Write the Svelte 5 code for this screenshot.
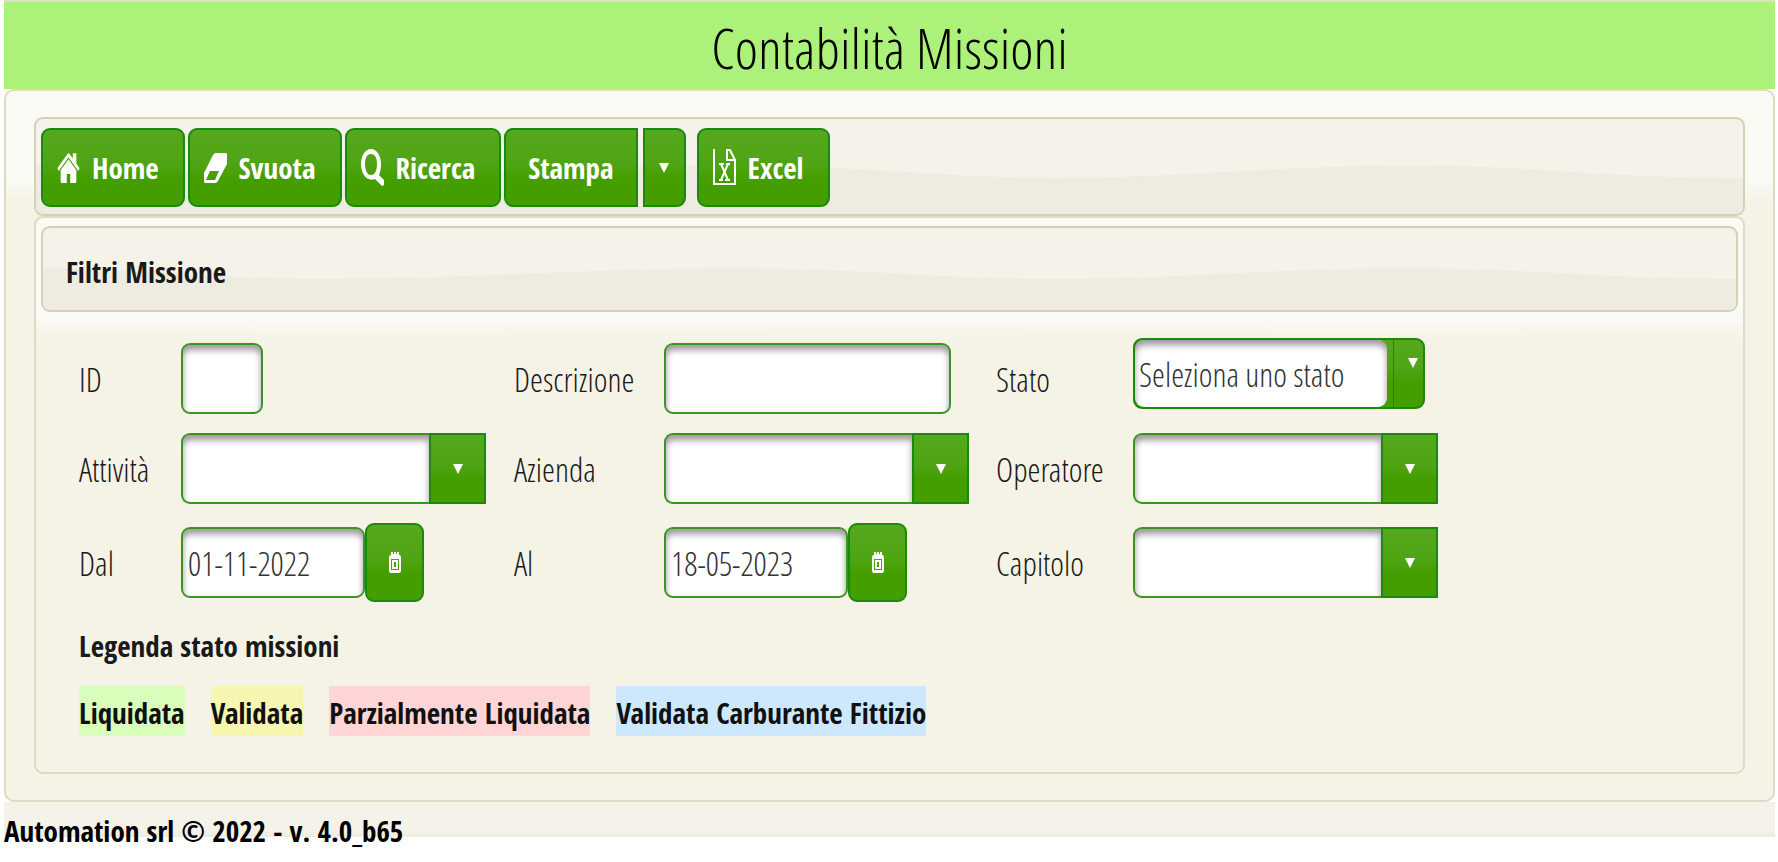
<script lang="ts">
  interface LegendItem {
    label: string;
    tone: string;
  }

  let id = $state('');
  let descrizione = $state('');
  let stato = $state('');
  let attivita = $state('');
  let azienda = $state('');
  let operatore = $state('');
  let capitolo = $state('');
  let dal = $state('01-11-2022');
  let al = $state('18-05-2023');

  const legend: LegendItem[] = [
    { label: 'Liquidata', tone: 'green' },
    { label: 'Validata', tone: 'yellow' },
    { label: 'Parzialmente Liquidata', tone: 'red' },
    { label: 'Validata Carburante Fittizio', tone: 'blue' }
  ];

  function clearFilters() {
    id = descrizione = stato = attivita = azienda = operatore = capitolo = dal = al = '';
  }
</script>

{#snippet wave()}
  <svg class="wave" viewBox="0 0 1704 100" preserveAspectRatio="none" aria-hidden="true">
    <path d="M0 49C100 49 160 62 290 62S550 49 690 49S900 62 1020 62S1240 49 1370 49S1560 62 1704 62V100H0Z" />
  </svg>
{/snippet}

{#snippet caret()}
  <svg class="caret" viewBox="0 0 10 10" preserveAspectRatio="none" aria-hidden="true"><path d="M0 0H10L5 10Z" /></svg>
{/snippet}

{#snippet calendar()}
  <svg class="calendar" viewBox="0 0 12 21" aria-hidden="true">
    <path fill-rule="evenodd" d="M2 0h2v2h1V0h2v2h1V0h2v3h1l1 2v14l-1 2H1l-1-2V5l1-2h1zM2 7v11h8V7zM3 8h6v9H3zM5 10v5h2v-5z" />
  </svg>
{/snippet}

<header class="title-bar">
  <h1>Contabilità Missioni</h1>
</header>

<main class="page-panel">
  <div class="toolbar">
    {@render wave()}
    <button type="button" class="btn">
      <svg class="icon" viewBox="50 240 1692 1300" preserveAspectRatio="none" aria-hidden="true">
        <path d="M1472 992v480q0 26-19 45t-45 19h-384v-384h-256v384h-384q-26 0-45-19t-19-45v-480q0-1 .5-3t.5-3l575-474 575 474q1 2 1 6zm223-69l-62 74q-8 9-21 11h-3q-13 0-21-7l-692-577-692 577q-12 8-24 7-13-2-21-11l-62-74q-8-10-7-23.500t11-21.500l719-599q32-26 76-26t76 26l244 204v-195q0-14 9-23t23-9h192q14 0 23 9t9 23v408l219 182q10 8 11 21.500t-7 23.500z" />
      </svg>
      Home
    </button>
    <button type="button" class="btn" onclick={clearFilters}>
      <svg class="icon" viewBox="0 0 23 30" preserveAspectRatio="none" aria-hidden="true">
        <path fill-rule="evenodd" d="M11 0H22L23 1V11L14 28L12 30H1L0 29V20L9 2ZM6 18L2 27H11L15 18Z" />
      </svg>
      Svuota
    </button>
    <button type="button" class="btn">
      <svg class="icon tall" viewBox="0 0 23 37" preserveAspectRatio="none" aria-hidden="true">
        <path fill-rule="evenodd" d="M10 0C16 0 20 7 20 15C20 20 19 24 18 26L23 31V36L21 37L14 30C6 33 0 25 0 15C0 7 4 0 10 0ZM10 5C6 5 4 9 4 15S6 26 10 26S16 21 16 15S14 5 10 5Z" />
      </svg>
      Ricerca
    </button>
    <div class="split">
      <button type="button" class="btn main-action">Stampa</button>
      <button type="button" class="btn menu-action" aria-label="Altre stampe">{@render caret()}</button>
    </div>
    <button type="button" class="btn">
      <svg class="icon tall" viewBox="0 0 23 37" preserveAspectRatio="none" aria-hidden="true">
        <path d="M1 0V35H22V11H14V1H17L22 11" fill="none" stroke="#fff" stroke-width="2" />
        <path d="M8 15L15 31M15 15L8 31" fill="none" stroke="#fff" stroke-width="2" />
        <path d="M6 14h5v2H6zM13 14h4v2h-4zM6 30h4v2H6zM12 30h5v2h-5z" />
      </svg>
      Excel
    </button>
  </div>

  <section class="filter-panel">
    <div class="panel-header">
      {@render wave()}
      <h2>Filtri Missione</h2>
    </div>

    <form class="filters">
      <label for="id">ID</label>
      <input id="id" class="field short" type="text" bind:value={id} />
      <label for="descrizione">Descrizione</label>
      <input id="descrizione" class="field wide" type="text" bind:value={descrizione} />
      <label for="stato">Stato</label>
      <div class="select-menu">
        <select id="stato" class="field" bind:value={stato}>
          <option value="">Seleziona uno stato</option>
          {#each legend as item}
            <option value={item.label}>{item.label}</option>
          {/each}
        </select>
        <span class="trigger">{@render caret()}</span>
      </div>

      <label for="attivita">Attività</label>
      <div class="combo">
        <input id="attivita" class="field" type="text" bind:value={attivita} />
        <button type="button" class="btn" aria-label="Mostra attività">{@render caret()}</button>
      </div>
      <label for="azienda">Azienda</label>
      <div class="combo">
        <input id="azienda" class="field" type="text" bind:value={azienda} />
        <button type="button" class="btn" aria-label="Mostra aziende">{@render caret()}</button>
      </div>
      <label for="operatore">Operatore</label>
      <div class="combo">
        <input id="operatore" class="field" type="text" bind:value={operatore} />
        <button type="button" class="btn" aria-label="Mostra operatori">{@render caret()}</button>
      </div>

      <label for="dal">Dal</label>
      <div class="date">
        <input id="dal" class="field" type="text" bind:value={dal} />
        <button type="button" class="btn" aria-label="Scegli data iniziale">{@render calendar()}</button>
      </div>
      <label for="al">Al</label>
      <div class="date">
        <input id="al" class="field" type="text" bind:value={al} />
        <button type="button" class="btn" aria-label="Scegli data finale">{@render calendar()}</button>
      </div>
      <label for="capitolo">Capitolo</label>
      <div class="combo">
        <input id="capitolo" class="field" type="text" bind:value={capitolo} />
        <button type="button" class="btn" aria-label="Mostra capitoli">{@render caret()}</button>
      </div>
    </form>

    <div class="legend">
      <h3>Legenda stato missioni</h3>
      <div class="legend-items">
        {#each legend as item}
          <span class="chip {item.tone}">{item.label}</span>
        {/each}
      </div>
    </div>
  </section>
</main>

<footer>Automation srl © 2022 - v. 4.0_b65</footer>

<style>
  :global(body) {
    margin: 0;
    background: #fff;
    color: #1a1a1a;
    font-family: 'Open Sans Condensed Light', 'Roboto Condensed Light', 'Roboto Condensed', sans-serif;
    font-size: 33px;
    font-weight: 300;
  }

  h1, h2, h3 { margin: 0; }

  .title-bar {
    margin: 0 3px 0 4px;
    padding-top: 4px;
    border-top: 2px solid #e3dcc8;
    background: #acf27a;
    text-align: center;
  }

  h1 {
    color: #000;
    font-size: 56px;
    font-weight: 300;
    line-height: 83px;
  }

  .page-panel {
    margin: 0 3px 0 4px;
    padding: 26px 28px;
    border: 2px solid #dfdac4;
    border-radius: 10px;
    background: linear-gradient(#fafaf5 0, #fafaf5 90px, #f5f3e5 112px);
  }

  .toolbar, .panel-header {
    position: relative;
    display: flex;
    align-items: center;
    border: 2px solid #d6d0b4;
    border-radius: 9px;
    background: #f5f2ea;
    overflow: hidden;
  }

  .toolbar {
    gap: 3px;
    padding: 9px 5px 7px;
  }

  .wave {
    position: absolute;
    inset: 0;
    width: 100%;
    height: 100%;
    fill: #eeece0;
  }

  .btn, h2, h3, .chip, footer {
    font-family: 'Open Sans Condensed', 'Roboto Condensed', sans-serif;
    font-size: 29px;
    font-weight: 700;
  }

  .btn {
    position: relative;
    display: flex;
    align-items: center;
    justify-content: center;
    gap: 12px;
    box-sizing: border-box;
    height: 79px;
    padding: 0 24px 0 14px;
    border: 2px solid #1a8a0a;
    border-radius: 9px;
    background: linear-gradient(#56a81c 0%, #4fa414 45%, #459e00 65%, #459e00 100%);
    color: #fff;
    cursor: pointer;
  }

  svg { fill: #fff; }

  .icon {
    width: 23px;
    height: 30px;
  }

  .icon.tall { height: 37px; }

  .caret {
    width: 10px;
    height: 10px;
  }

  .calendar {
    width: 12px;
    height: 21px;
  }

  .split {
    display: flex;
    gap: 5px;
    margin-right: 8px;
  }

  .main-action {
    padding: 0 22px;
    border-radius: 9px 0 0 9px;
  }

  .menu-action {
    width: 43px;
    padding: 0;
    border-radius: 0 9px 9px 0;
  }

  .filter-panel {
    padding: 8px 5px 36px;
    border: 2px solid #dfdac4;
    border-radius: 9px;
    background: linear-gradient(#fafaf5 0, #fafaf5 100px, #f5f3e5 122px);
  }

  .panel-header {
    padding: 5px 23px 0;
  }

  h2 {
    position: relative;
    line-height: 77px;
  }

  .filters {
    display: grid;
    grid-template-columns: 102px 333px 150px 332px 137px 1fr;
    grid-template-rows: 76px 71px 79px;
    row-gap: 19px;
    align-items: center;
    padding: 26px 38px 0;
  }

  .filters > :nth-child(-n + 5) { align-self: end; }

  .filters > .select-menu { align-self: start; }

  label {
    padding-top: 3px;
    line-height: 68px;
  }

  .field {
    box-sizing: border-box;
    min-width: 0;
    height: 71px;
    padding: 2px 5px 0;
    border: 2px solid #3a9420;
    border-radius: 9px;
    background: #fff;
    box-shadow: inset 0 5px 6px rgba(60, 50, 60, 0.5);
    color: #333;
    font-family: inherit;
    font-size: 33px;
    font-weight: 300;
    outline: none;
  }

  .short { width: 82px; }

  .wide { width: 287px; }

  .combo, .date, .select-menu { display: flex; }

  .combo { width: 305px; }

  .combo .field {
    flex: 1;
    border-right: 0;
    border-radius: 9px 0 0 9px;
  }

  .combo .btn {
    width: 57px;
    height: 71px;
    padding: 0;
    border-radius: 0;
  }

  .date { align-items: center; }

  .date .field { width: 184px; }

  .date .btn {
    width: 59px;
    padding: 0;
  }

  .select-menu {
    box-sizing: border-box;
    width: 292px;
    height: 71px;
    border: 2px solid #1a8a0a;
    border-radius: 9px;
    background: linear-gradient(#56a81c 0%, #4fa414 45%, #459e00 65%, #459e00 100%);
    overflow: hidden;
  }

  .select-menu .field {
    appearance: none;
    width: 252px;
    height: 67px;
    padding: 2px 4px 0;
    border: 0;
  }

  .trigger {
    flex: 1;
    display: flex;
    justify-content: flex-end;
    margin-left: 6px;
    padding: 18px 5px 0 0;
    border-left: 1px solid #1a8a0a;
  }

  .legend { padding: 23px 38px 0; }

  h3 { line-height: 42px; }

  .legend-items {
    display: flex;
    gap: 26px;
    margin-top: 19px;
  }

  .chip {
    box-sizing: border-box;
    height: 50px;
    padding-top: 4px;
    color: #111;
    line-height: 46px;
  }

  .green { background: #d9fdbb; }
  .yellow { background: #f7f6b0; }
  .red { background: #ffd5d5; }
  .blue { background: #cde8fd; }

  footer {
    margin: 0 3px 0 4px;
    background: linear-gradient(#f5f2ea 28px, #eeece0 35px, transparent 35px);
    color: #000;
    line-height: 58px;
  }
</style>
